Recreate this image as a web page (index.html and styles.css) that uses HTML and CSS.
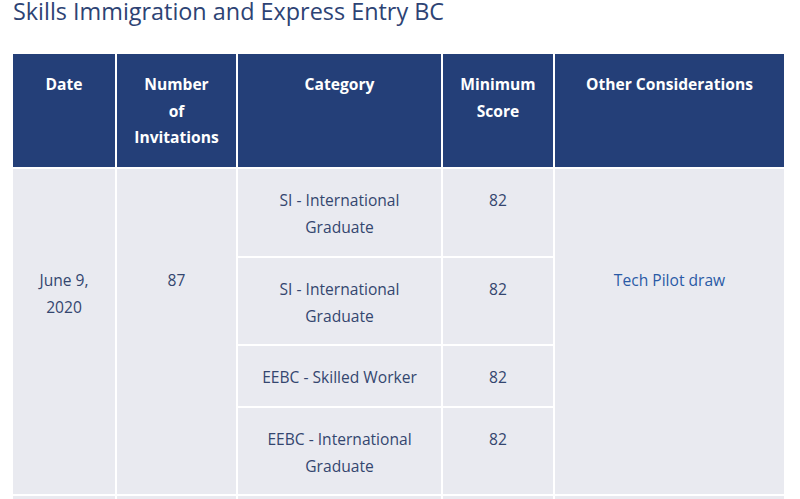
FILE: index.html
```html
<!DOCTYPE html>
<html lang="en">
<head>
<meta charset="utf-8">
<title>Skills Immigration and Express Entry BC</title>
<link rel="stylesheet" href="styles.css">
</head>
<body>
<h2 class="title">Skills Immigration and Express Entry BC</h2>
<div class="draws">
  <div class="cell head">Date</div>
  <div class="cell head">Number<br>of<br>Invitations</div>
  <div class="cell head">Category</div>
  <div class="cell head">Minimum<br>Score</div>
  <div class="cell head">Other Considerations</div>

  <div class="cell span date">June 9,<br>2020</div>
  <div class="cell span num">87</div>
  <div class="cell r1 cat">SI - International<br>Graduate</div>
  <div class="cell r1 score">82</div>
  <div class="cell span other"><span class="link">Tech Pilot draw</span></div>

  <div class="cell r2 cat">SI - International<br>Graduate</div>
  <div class="cell r2 score">82</div>
  <div class="cell r3 cat">EEBC - Skilled Worker</div>
  <div class="cell r3 score">82</div>
  <div class="cell r4 cat">EEBC - International<br>Graduate</div>
  <div class="cell r4 score">82</div>

  <div class="cell next"></div>
  <div class="cell next"></div>
  <div class="cell next"></div>
  <div class="cell next"></div>
  <div class="cell next"></div>
</div>
</body>
</html>
```
FILE: styles.css
```css
html, body {
  margin: 0;
  padding: 0;
  background: #ffffff;
  overflow: hidden;
}
body {
  font-family: "Open Sans", "Liberation Sans", sans-serif;
  color: #34466f;
}
.title {
  margin: -5px 0 0 13px;
  font-weight: 400;
  font-size: 23.4px;
  line-height: 32px;
  color: #2d4374;
  height: 28px;
}
.draws {
  margin: 31px 0 0 13px;
  display: grid;
  grid-template-columns: 102px 119px 203px 110px 229px;
  grid-template-rows: 113px 87px 86px 60px 86px 40px;
  gap: 2px;
  width: 771px;
}
.cell {
  background: #e9eaf0;
  text-align: center;
  font-size: 15.6px;
  line-height: 26.5px;
  padding-top: 18px;
}
.head {
  background: #243f78;
  color: #ffffff;
  font-weight: 700;
  padding-top: 17px;
}
.span {
  grid-row: 2 / span 4;
  padding-top: 98px;
}
.date { grid-column: 1; }
.num { grid-column: 2; }
.other { grid-column: 5; }
.cat { grid-column: 3; }
.score { grid-column: 4; }
.r1 { grid-row: 2; }
.r2 { grid-row: 3; }
.r3 { grid-row: 4; }
.r4 { grid-row: 5; }
.link {
  color: #2a5aa6;
}
```
